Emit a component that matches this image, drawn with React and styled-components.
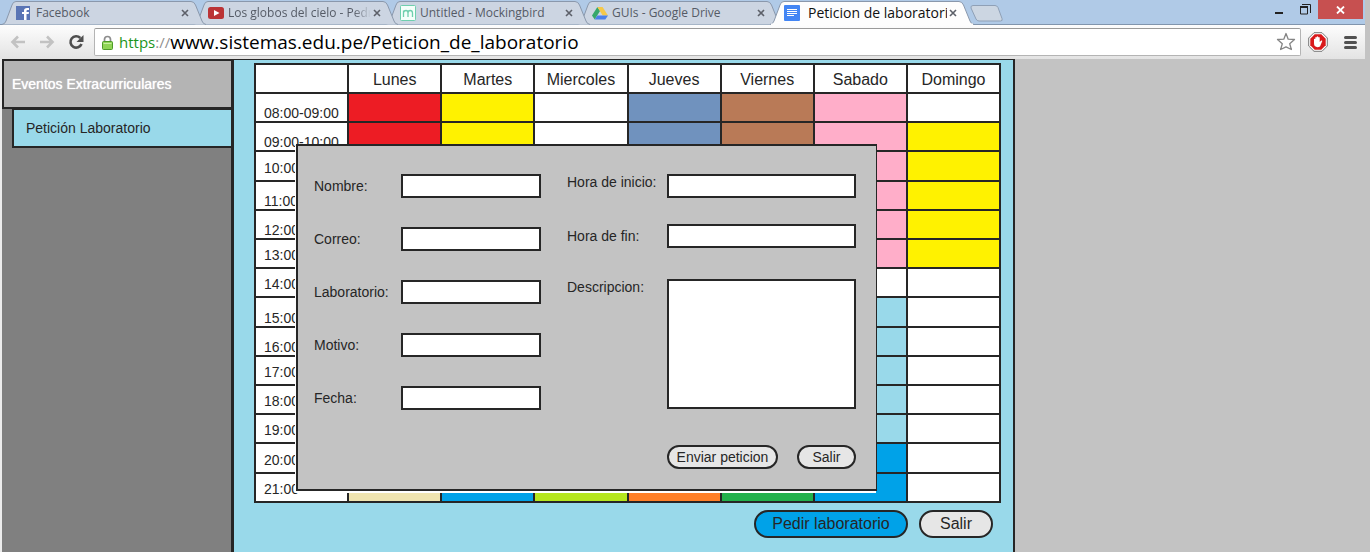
import React from "react";
import styled, { createGlobalStyle } from "styled-components";

const ink = "#262626";
const sans = '"Liberation Sans", Arial, sans-serif';
const chromeFont = '"Open Sans", "Noto Sans", sans-serif';

const GlobalStyle = createGlobalStyle`
  *, *::before, *::after { box-sizing: border-box; }
  body { margin: 0; background: #c3c3c3; font-family: ${sans}; color: ${ink}; }
  button, input, textarea { font: inherit; color: inherit; margin: 0; }
`;

/* ---------- browser window ---------- */

const Page = styled.div`
  display: flex;
  flex-direction: column;
  min-height: 100vh;
`;

const Browser = styled.header`
  margin-right: 5px;
  font-family: ${chromeFont};
`;

const TitleBar = styled.div`
  display: flex;
  align-items: flex-start;
  height: 25px;
  padding-left: 2px;
  background: #b0cae7;
  box-shadow: inset 0 -1px 0 #8195ad;
`;

const TabList = styled.nav`
  display: flex;
  padding-top: 1px;
`;

const Tab = styled.div`
  position: relative;
  z-index: ${(p) => (p.$active ? 6 : p.$order)};
  display: flex;
  align-items: center;
  width: 204px;
  height: 24px;
  margin-right: -12px;
  padding: 0 15px 0 14px;
`;

const TabShape = styled.svg`
  position: absolute;
  inset: 0;
  width: 100%;
  height: 100%;
`;

const Favicon = styled.svg`
  position: relative;
  flex: none;
  width: 16px;
  height: 16px;
`;

const TabTitle = styled.a`
  position: relative;
  flex: 1;
  min-width: 0;
  margin-left: ${(p) => (p.$active ? 8 : 4)}px;
  overflow: hidden;
  white-space: nowrap;
  text-decoration: none;
  font-size: ${(p) => (p.$active ? 14 : 12)}px;
  line-height: 20px;
  color: ${(p) => (p.$active ? "#111" : "#555b66")};
  ${(p) => p.$fade && "mask-image: linear-gradient(90deg, #000 88%, transparent);"}
`;

const TabClose = styled.button`
  position: relative;
  flex: none;
  display: flex;
  padding: 4px 2px;
  border: 0;
  background: none;
`;

const NewTab = styled.button`
  display: flex;
  margin: 5px 0 0 8px;
  padding: 0;
  border: 0;
  background: none;
`;

const WindowControls = styled.div`
  display: flex;
  margin-left: auto;
  padding-right: 2px;
`;

const WindowButton = styled.button`
  display: flex;
  align-items: center;
  justify-content: center;
  width: ${(p) => (p.$close ? 45 : 26)}px;
  height: ${(p) => (p.$close ? 19 : 18)}px;
  padding: 0;
  border: 0;
  background: ${(p) => (p.$close ? "#c75050" : "none")};
`;

const Toolbar = styled.div`
  display: flex;
  align-items: center;
  height: 34px;
  padding-left: 5px;
  background: linear-gradient(#fdfdfd, #e3e3e3);
`;

const ToolButton = styled.button`
  flex: none;
  display: flex;
  align-items: center;
  justify-content: center;
  width: ${(p) => p.$width}px;
  height: 26px;
  padding: 0;
  border: 0;
  background: none;
`;

const AddressBar = styled.div`
  flex: 1;
  display: flex;
  align-items: center;
  min-width: 0;
  height: 28px;
  margin-left: 6px;
  padding: 0 4px 0 7px;
  border: 1px solid #b4b4b4;
  border-top-color: #9a9a9a;
  border-radius: 2px;
  background: #fff;
`;

const Scheme = styled.label`
  margin-left: 6px;
  font-size: 15px;
  line-height: 24px;
  color: #1c951c;
`;

const Slashes = styled.span`
  color: #909090;
`;

const UrlInput = styled.input`
  flex: 1;
  min-width: 0;
  height: 24px;
  padding: 0;
  border: 0;
  outline: 0;
  background: none;
  font-size: 19px;
  color: #000;
`;

/* ---------- application ---------- */

const Workspace = styled.div`
  flex: 1;
  display: flex;
  padding-left: 2px;
  background: linear-gradient(90deg, #ececec 2px, #c3c3c3 2px);
`;

const Sidebar = styled.aside`
  flex: 0 0 229px;
  background: #808080;
`;

const SidebarHeading = styled.h2`
  margin: 0;
  padding: 0 8px;
  border: 2px solid ${ink};
  border-right: 0;
  background: #b4b4b4;
  font-size: 14px;
  font-weight: 400;
  line-height: 46px;
  color: #fff;
  text-shadow: 0 0 1px #fff;
`;

const SidebarLink = styled.a`
  display: block;
  margin-left: 10px;
  padding: 0 12px;
  border: 2px solid ${ink};
  border-top-width: 1px;
  border-right: 0;
  background: #99d9ea;
  font-size: 14px;
  line-height: 36px;
  color: ${ink};
  text-decoration: none;
`;

const Main = styled.main`
  position: relative;
  flex: 0 1 784px;
  padding: 3px 12px 14px 20px;
  border: solid ${ink};
  border-width: 1px 2px 0 3px;
  background: #99d9ea;
`;

const Schedule = styled.table`
  width: 100%;
  height: 440px;
  table-layout: fixed;
  border-collapse: collapse;
  border: 2px solid ${ink};
  background: #fff;
`;

const ScheduleRow = styled.tr`
  height: 29px;
`;

const DayHeading = styled.th`
  padding: 2px 0 0;
  border: 2px solid ${ink};
  font-size: 16px;
  font-weight: 400;
  line-height: 18px;
`;

const HourHeading = styled.th`
  padding: ${(p) => (p.$low ? 0 : 3)}px 0 0 8px;
  border: 2px solid ${ink};
  font-size: 14px;
  font-weight: 400;
  line-height: 16px;
  text-align: left;
  vertical-align: ${(p) => (p.$low ? "bottom" : "middle")};
  white-space: nowrap;
`;

const Slot = styled.td`
  padding: 0;
  border: 2px solid ${ink};
  background: ${(p) => p.$color || "#fff"};
`;

const Actions = styled.div`
  display: flex;
  justify-content: flex-end;
  gap: 11px;
  margin: 7px 8px 0 0;
`;

const PillButton = styled.button`
  width: ${(p) => p.$width}px;
  height: ${(p) => (p.$large ? 28 : 24)}px;
  padding: 0;
  border: 2px solid ${ink};
  border-radius: 14px;
  background: ${(p) => (p.$primary ? "#00a2e8" : "#e6e6e6")};
  font-size: ${(p) => (p.$large ? 16 : 14)}px;
  line-height: 18px;
  white-space: nowrap;
`;

const RequestDialog = styled.form`
  position: absolute;
  top: 84px;
  left: 62px;
  width: 581px;
  padding: 28px 20px 20px 16px;
  border: 2px solid ${ink};
  border-right-width: 1px;
  background: #c3c3c3;
  box-shadow: -1px 2px 0 #fff;
`;

const Columns = styled.div`
  display: flex;
  justify-content: space-between;
`;

const FieldGroup = styled.div`
  display: flex;
  flex-direction: column;
  gap: ${(p) => p.$gap}px;
`;

const Field = styled.div`
  display: flex;
  align-items: ${(p) => (p.$top ? "flex-start" : "center")};
  margin-top: ${(p) => (p.$spaced ? 5 : 0)}px;
`;

const FieldLabel = styled.label`
  width: ${(p) => p.$width}px;
  font-size: 14px;
  line-height: 16px;
  white-space: nowrap;
`;

const TextBox = styled.input`
  width: ${(p) => p.$width}px;
  height: 24px;
  padding: 0 4px;
  border: 2px solid ${ink};
  border-radius: 0;
  background: #fff;
  font-size: 14px;
`;

const TextArea = styled(TextBox)`
  height: 130px;
  resize: none;
`;

const DialogActions = styled.div`
  display: flex;
  justify-content: flex-end;
  gap: 19px;
  margin-top: 35px;
`;

const icons = {
  facebook: (
    <>
      <rect x="0" y="1" width="14" height="14" fill="#5a75b5" />
      <path d="M8 15V9H6V7h2V5.500Q8 3 11 3h2v2h-1.500Q10.500 5 10.500 6v1H13l-.3 2h-2.200v6z" fill="#fff" />
    </>
  ),
  youtube: (
    <>
      <rect x="0" y="2" width="16" height="12" rx="2.500" fill="#bb3436" />
      <path d="M6 5l5.500 3L6 11z" fill="#fff" />
    </>
  ),
  mockingbird: (
    <>
      <rect x=".5" y=".5" width="15" height="15" rx="1" fill="#f4fffa" stroke="#6fcfae" />
      <path d="M3.500 12V5.500M3.500 7.500Q4 5.500 6 5.500T8 8v4M8 8Q8 5.500 10.200 5.500T12.500 8v4" fill="none" stroke="#6fcfae" strokeWidth="1.300" />
    </>
  ),
  drive: (
    <>
      <path d="M5.400 2L0 10.500l2.700 4L8 6z" fill="#35a76c" />
      <path d="M5.400 2h5.200l5.400 8.500h-5.300z" fill="#f5c84a" />
      <path d="M5.300 10.500H16l-2.700 4H2.700z" fill="#4a80ea" />
    </>
  ),
  docs: (
    <>
      <rect width="16" height="16" rx="1" fill="#4285f4" />
      <path d="M3 4.500h10M3 6.500h10M3 8.500h10M3 10.500h7" stroke="#fff" />
    </>
  ),
};

const tabs = [
  { icon: "facebook", title: "Facebook" },
  { icon: "youtube", title: "Los globos del cielo - Pedr", fade: true },
  { icon: "mockingbird", title: "Untitled - Mockingbird" },
  { icon: "drive", title: "GUIs - Google Drive" },
  { icon: "docs", title: "Peticion de laboratori", active: true },
];

const days = ["Lunes", "Martes", "Miercoles", "Jueves", "Viernes", "Sabado", "Domingo"];

const red = "#ed1c24";
const yellow = "#fff200";
const steel = "#7092be";
const brown = "#b97a57";
const pink = "#ffaec9";
const sky = "#99d9ea";
const blue = "#00a2e8";

const hours = [
  { time: "08:00-09:00", low: true, slots: [red, yellow, "", steel, brown, pink, ""] },
  { time: "09:00-10:00", low: true, slots: [red, yellow, "", steel, brown, pink, yellow] },
  { time: "10:00", slots: ["", "", "", "", "", pink, yellow] },
  { time: "11:00", low: true, slots: ["", "", "", "", "", pink, yellow] },
  { time: "12:00", low: true, slots: ["", "", "", "", "", pink, yellow] },
  { time: "13:00", slots: ["", "", "", "", "", pink, yellow] },
  { time: "14:00", slots: ["", "", "", "", "", "", ""] },
  { time: "15:00", low: true, slots: ["", "", "", "", "", sky, ""] },
  { time: "16:00", low: true, slots: ["", "", "", "", "", sky, ""] },
  { time: "17:00", slots: ["", "", "", "", "", sky, ""] },
  { time: "18:00", slots: ["", "", "", "", "", sky, ""] },
  { time: "19:00", slots: ["", "", "", "", "", sky, ""] },
  { time: "20:00", slots: ["", "", "", "", "", blue, ""] },
  { time: "21:00", slots: ["#efe4b0", blue, "#b5e61d", "#ff7f27", "#22b14c", blue, ""] },
];

const leftFields = [
  { id: "nombre", label: "Nombre:" },
  { id: "correo", label: "Correo:" },
  { id: "laboratorio", label: "Laboratorio:" },
  { id: "motivo", label: "Motivo:" },
  { id: "fecha", label: "Fecha:" },
];

function BrowserTab({ icon, title, active, fade, order }) {
  return (
    <Tab $active={active} $order={order}>
      <TabShape viewBox="0 0 204 24" preserveAspectRatio="none" aria-hidden="true">
        <path
          d="M0 23.500Q3 23 4 20L10 4Q11 .5 14 .5H189Q192 .5 193.500 4L200 20Q201 23 204 23.500"
          fill={active ? "#fdfdfd" : "#ccd5e2"}
          stroke="#8a98ac"
        />
        {active && <path d="M1 24h202v-1.500H1z" fill="#fdfdfd" />}
      </TabShape>
      <Favicon viewBox="0 0 16 16" aria-hidden="true">{icons[icon]}</Favicon>
      <TabTitle href="#" $active={active} $fade={fade}>{title}</TabTitle>
      <TabClose type="button" aria-label="Cerrar">
        <svg width="8" height="8" viewBox="0 0 8 8">
          <path d="M1 1l6 6M7 1L1 7" stroke="#5c6069" strokeWidth="1.600" />
        </svg>
      </TabClose>
    </Tab>
  );
}

function BrowserChrome() {
  return (
    <Browser>
      <TitleBar>
        <TabList>
          {tabs.map((tab, i) => (
            <BrowserTab key={tab.title} {...tab} order={5 - i} />
          ))}
        </TabList>
        <NewTab type="button" aria-label="Nueva pestaña">
          <svg width="33" height="17" viewBox="0 0 33 17">
            <path d="M3 .5h22q2 0 3 2l4 11q1 2.500-1.500 2.500H9q-2 0-3-2L1 3Q.5.500 3 .5z" fill="#ccd6e2" stroke="#8fa0b6" />
          </svg>
        </NewTab>
        <WindowControls>
          <WindowButton type="button" aria-label="Minimizar">
            <svg width="8" height="12"><path d="M0 9h8v2H0z" fill="#222" /></svg>
          </WindowButton>
          <WindowButton type="button" aria-label="Restaurar">
            <svg width="11" height="11" viewBox="0 0 11 11">
              <path d="M2 .5h8.500V9" fill="none" stroke="#222" />
              <path d="M.5 3.500h7v6.500h-7z" fill="none" stroke="#222" />
              <path d="M0 2h8v2H0z" fill="#222" />
            </svg>
          </WindowButton>
          <WindowButton type="button" $close aria-label="Cerrar ventana">
            <svg width="9" height="8" viewBox="0 0 9 8">
              <path d="M1 .5l7 7M8 .5l-7 7" stroke="#fff" strokeWidth="1.800" />
            </svg>
          </WindowButton>
        </WindowControls>
      </TitleBar>
      <Toolbar>
        <ToolButton type="button" $width={25} aria-label="Atrás">
          <svg width="16" height="14" viewBox="0 0 16 14">
            <path d="M15 7H3M8 1.500L2.500 7 8 12.500" fill="none" stroke="#c2c2c2" strokeWidth="2.600" />
          </svg>
        </ToolButton>
        <ToolButton type="button" $width={33} aria-label="Adelante">
          <svg width="16" height="14" viewBox="0 0 16 14">
            <path d="M1 7h12M8 1.500L13.500 7 8 12.500" fill="none" stroke="#c2c2c2" strokeWidth="2.600" />
          </svg>
        </ToolButton>
        <ToolButton type="button" $width={25} aria-label="Recargar">
          <svg width="16" height="16" viewBox="0 0 16 16">
            <path d="M12.300 4A5.700 5.700 0 1 0 13.500 10" fill="none" stroke="#4f4f4f" strokeWidth="2.600" />
            <path d="M15.500 1v7H8.500z" fill="#4f4f4f" />
          </svg>
        </ToolButton>
        <AddressBar>
          <svg width="11" height="15" viewBox="0 0 11 15" aria-hidden="true">
            <path d="M2.500 7V4.500a3 3 0 0 1 6 0V7" fill="none" stroke="#8d8d8d" strokeWidth="1.700" />
            <rect x=".5" y="6.500" width="10" height="8" rx="1" fill="#8fd455" stroke="#4d9a28" />
            <path d="M1.500 8.500h8" stroke="#c6efa0" />
          </svg>
          <Scheme htmlFor="url">https<Slashes>://</Slashes></Scheme>
          <UrlInput id="url" defaultValue="www.sistemas.edu.pe/Peticion_de_laboratorio" spellCheck={false} />
          <svg width="20" height="20" viewBox="0 0 20 20" aria-hidden="true">
            <path d="M10 1.500l2.200 5.700 6.300.3-4.800 4.300 1.700 5.700L10 14.800 4.600 17.500l1.700-5.700L1.500 7.500l6.300-.3z" fill="#fff" stroke="#858585" strokeWidth="1.300" strokeLinejoin="round" />
          </svg>
        </AddressBar>
        <ToolButton type="button" $width={34} aria-label="AdBlock">
          <svg width="20" height="20" viewBox="0 0 20 20">
            <path d="M6 .7h8L19.300 6v8L14 19.300H6L.7 14V6z" fill="#fff" stroke="#777" />
            <path d="M6.700 2.300h6.600l4.400 4.400v6.600l-4.400 4.400H6.700l-4.400-4.400V6.700z" fill="#d9191b" />
            <path d="M6 7q.7-.7 1.300 0V5.500q.7-1 1.400 0V4.800q.8-1 1.500 0v.7q.8-.8 1.500 0V10l1.500-1.500q1.300-.4 1 .8L12 14.500q-3 1.500-5.300-.5Q6 13 6 11z" fill="#fff" />
          </svg>
        </ToolButton>
        <ToolButton type="button" $width={30} aria-label="Menú">
          <svg width="13" height="13" viewBox="0 0 13 13">
            <path d="M1.500 1.500h10M1.500 6.500h10M1.500 11.500h10" stroke="#515151" strokeWidth="3" strokeLinecap="round" />
          </svg>
        </ToolButton>
      </Toolbar>
    </Browser>
  );
}

function Timetable() {
  return (
    <Schedule>
      <thead>
        <ScheduleRow>
          <DayHeading />
          {days.map((day) => (
            <DayHeading key={day} scope="col">{day}</DayHeading>
          ))}
        </ScheduleRow>
      </thead>
      <tbody>
        {hours.map(({ time, low, slots }) => (
          <ScheduleRow key={time}>
            <HourHeading scope="row" $low={low}>{time}</HourHeading>
            {slots.map((color, i) => (
              <Slot key={days[i]} $color={color} />
            ))}
          </ScheduleRow>
        ))}
      </tbody>
    </Schedule>
  );
}

function LabRequest() {
  return (
    <RequestDialog onSubmit={(e) => e.preventDefault()}>
      <Columns>
        <FieldGroup $gap={29}>
          {leftFields.map(({ id, label }) => (
            <Field key={id}>
              <FieldLabel htmlFor={id} $width={87}>{label}</FieldLabel>
              <TextBox id={id} $width={140} />
            </Field>
          ))}
        </FieldGroup>
        <FieldGroup $gap={26}>
          <Field $top>
            <FieldLabel htmlFor="inicio" $width={100}>Hora de inicio:</FieldLabel>
            <TextBox id="inicio" $width={189} />
          </Field>
          <Field>
            <FieldLabel htmlFor="fin" $width={100}>Hora de fin:</FieldLabel>
            <TextBox id="fin" $width={189} />
          </Field>
          <Field $top $spaced>
            <FieldLabel htmlFor="descripcion" $width={100}>Descripcion:</FieldLabel>
            <TextArea as="textarea" id="descripcion" $width={189} />
          </Field>
        </FieldGroup>
      </Columns>
      <DialogActions>
        <PillButton type="submit" $width={111}>Enviar peticion</PillButton>
        <PillButton type="button" $width={59}>Salir</PillButton>
      </DialogActions>
    </RequestDialog>
  );
}

export default function App() {
  return (
    <Page>
      <GlobalStyle />
      <BrowserChrome />
      <Workspace>
        <Sidebar>
          <SidebarHeading>Eventos Extracurriculares</SidebarHeading>
          <SidebarLink href="#">Petición Laboratorio</SidebarLink>
        </Sidebar>
        <Main>
          <Timetable />
          <Actions>
            <PillButton type="button" $large $primary $width={154}>Pedir laboratorio</PillButton>
            <PillButton type="button" $large $width={74}>Salir</PillButton>
          </Actions>
          <LabRequest />
        </Main>
      </Workspace>
    </Page>
  );
}
